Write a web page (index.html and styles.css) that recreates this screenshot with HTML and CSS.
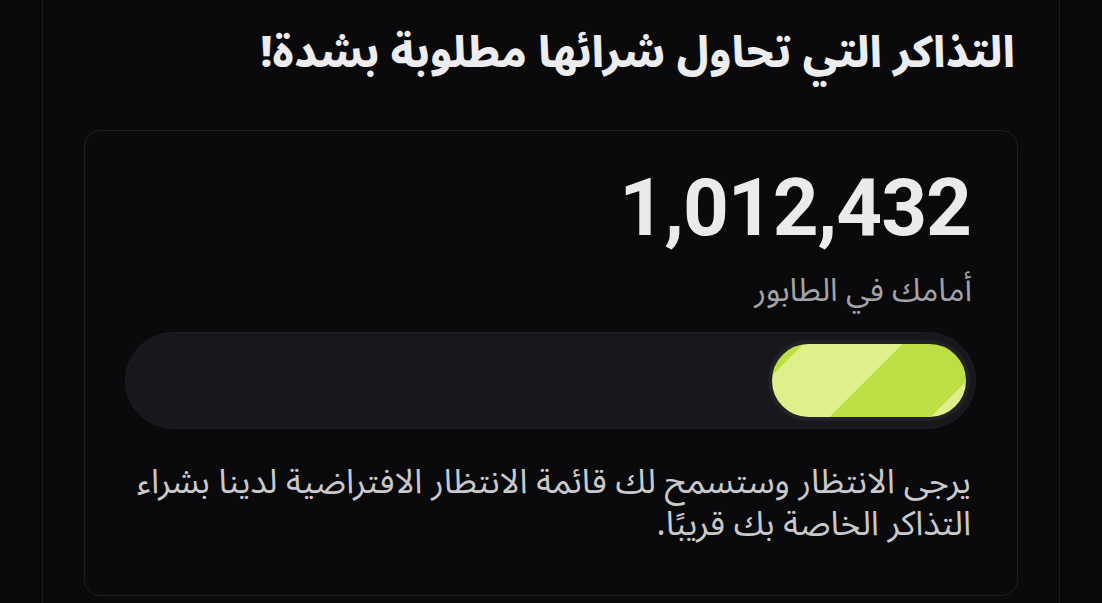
FILE: index.html
```html
<!DOCTYPE html>
<html lang="ar" dir="rtl">
<head>
<meta charset="utf-8">
<link rel="stylesheet" href="styles.css">
</head>
<body>
<div class="panel">
  <h1 class="title">التذاكر التي تحاول شرائها مطلوبة بشدة!</h1>
  <div class="card">
    <div class="count">1,012,432</div>
    <div class="label">أمامك في الطابور</div>
    <div class="track"><div class="fill" style="width:202px"></div></div>
    <p class="note">يرجى الانتظار وستسمح لك قائمة الانتظار الافتراضية لدينا بشراء التذاكر الخاصة بك قريبًا.</p>
  </div>
</div>
</body>
</html>
```
FILE: styles.css
```css
html, body {
  margin: 0;
  padding: 0;
  background: #08080a;
  height: 100%;
  overflow: hidden;
}
body {
  font-family: "Noto Sans Arabic", "Noto Sans", "DejaVu Sans", sans-serif;
  color: #ececee;
}
.panel {
  margin: 0 42px;
  min-height: 100%;
  box-sizing: border-box;
  border-left: 1px solid #1c1c1f;
  border-right: 1px solid #1c1c1f;
  background: #0a0a0c;
  padding: 18px 41px 0 41px;
}
.title {
  margin: 0 3px 0 0;
  font-size: 43px;
  font-weight: 800;
  line-height: 72px;
  color: #ededef;
}
.card {
  margin-top: 40px;
  border: 1.5px solid #1f1f22;
  border-radius: 16px;
  background: #0a0a0c;
  padding: 32px 41px 50px 40px;
}
.count {
  font-family: Roboto, "Liberation Sans", sans-serif;
  font-weight: 700;
  font-size: 80px;
  letter-spacing: -1px;
  line-height: 90px;
  color: #ebebed;
  direction: ltr;
  text-align: right;
  padding-right: 5px;
}
.label {
  margin-top: 18px;
  margin-right: 4px;
  font-size: 32px;
  line-height: 40px;
  color: #a3a3a7;
}
.track {
  margin-top: 21px;
  height: 97px;
  border-radius: 49px;
  background: #18181c;
  border: 1px solid #1e1e22;
  display: flex;
  align-items: center;
  padding: 0 5px;
  box-sizing: border-box;
}
.fill {
  height: 81px;
  border-radius: 41px;
  box-sizing: border-box;
  border: 4px solid #222224;
  background: repeating-linear-gradient(135deg, #bcdf43 0, #bcdf43 22px, #def08c 22px, #def08c 92px, #bcdf43 92px, #bcdf43 142px);
}
.note {
  margin: 32px 5px 0 0;
  font-size: 34px;
  line-height: 42px;
  color: #c9c9cc;
}
```
